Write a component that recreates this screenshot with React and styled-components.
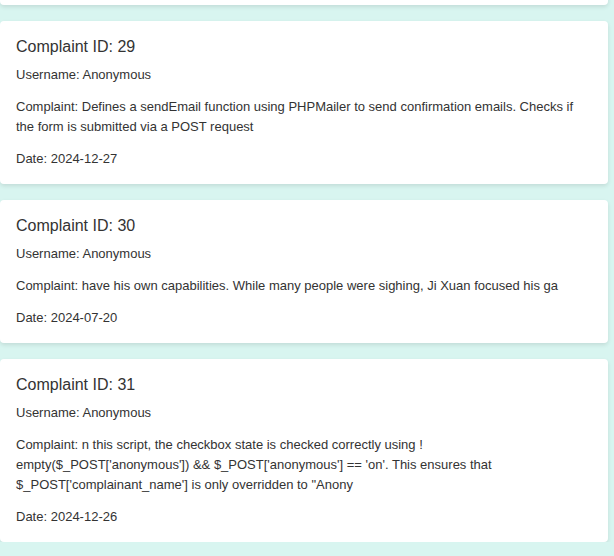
import React from 'react'
import styled, { createGlobalStyle } from 'styled-components'

const GlobalStyle = createGlobalStyle`
  html, body {
    margin: 0;
    padding: 0;
    background: #d8f5f0;
    font-family: 'Liberation Sans', Arial, sans-serif;
    color: #333;
    overflow: hidden;
  }
`

const List = styled.div`
  display: flex;
  flex-direction: column;
  gap: 16px;
  width: 608px;
  margin-top: -139px;
`

const Card = styled.div`
  background: #fff;
  border-radius: 4px;
  box-shadow: 0 2px 4px rgba(0, 0, 0, 0.1);
  padding: 17px 16px 15px;
  display: flex;
  flex-direction: column;
  gap: 12px;
`

// the card above, scrolled almost out of view
const PrevCard = styled(Card)`
  height: 144px;
  box-sizing: border-box;
`

const Title = styled.h3`
  margin: 0 0 -3px;
  font-size: 16px;
  line-height: 18px;
  font-weight: normal;
  color: #333;
`

const Field = styled.p`
  margin: 0;
  font-size: 13px;
  line-height: 20px;
  color: #333;
  max-width: ${(p) => p.$wrap || 576}px;
`

const complaints = [
  {
    id: 29,
    text: 'Defines a sendEmail function using PHPMailer to send confirmation emails. Checks if the form is submitted via a POST request',
    date: '2024-12-27',
  },
  {
    id: 30,
    text: 'have his own capabilities. While many people were sighing, Ji Xuan focused his ga',
    date: '2024-07-20',
  },
  {
    id: 31,
    text: "n this script, the checkbox state is checked correctly using ! empty($_POST['anonymous']) && $_POST['anonymous'] == 'on'. This ensures that $_POST['complainant_name'] is only overridden to \"Anony",
    date: '2024-12-26',
    wrap: 500,
  },
]

export default () => (
  <>
    <GlobalStyle />
    <List>
      <PrevCard />
      {complaints.map((c) => (
        <Card key={c.id}>
          <Title>Complaint ID: {c.id}</Title>
          <Field>Username: Anonymous</Field>
          <Field $wrap={c.wrap}>Complaint: {c.text}</Field>
          <Field>Date: {c.date}</Field>
        </Card>
      ))}
    </List>
  </>
)
